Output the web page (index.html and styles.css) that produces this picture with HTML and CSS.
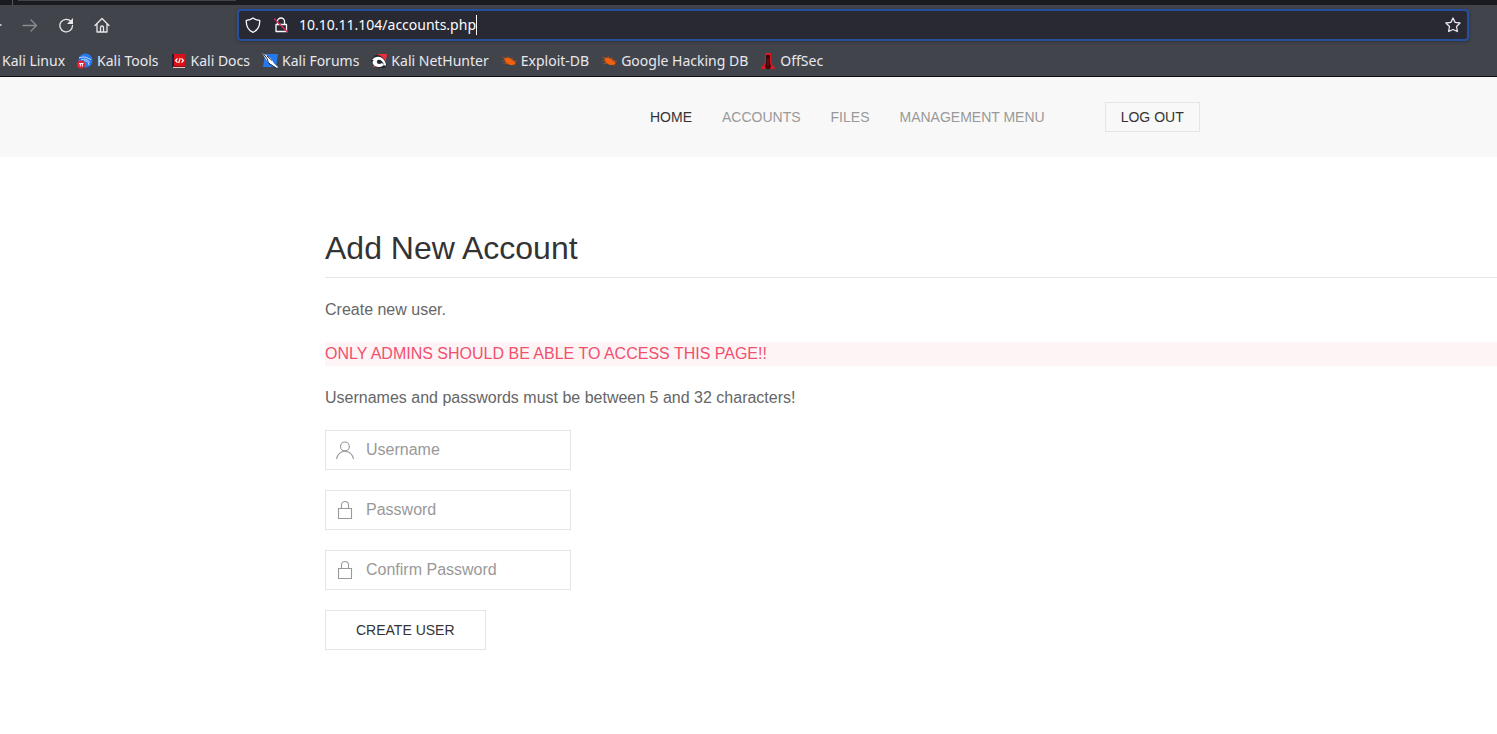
FILE: index.html
```html
<!DOCTYPE html>
<html lang="en">
<head>
<meta charset="utf-8">
<title>Accounts</title>
<link rel="stylesheet" href="styles.css">
</head>
<body>
<div class="browser">
  <div class="tabstrip"><span class="tab-edge"></span><span class="tab"></span></div>
  <div class="toolbar">
    <div class="nav-buttons">
      <button class="tool back" aria-label="Back"><svg width="16" height="16" viewBox="0 0 16 16"><path d="M2 8h13M7 3L2 8l5 5"/></svg></button>
      <button class="tool forward" aria-label="Forward" disabled><svg width="16" height="16" viewBox="0 0 16 16"><path d="M1 8.500h13.500M9 3l5.500 5.500L9 14"/></svg></button>
      <button class="tool" aria-label="Reload"><svg width="16" height="16" viewBox="0 0 16 16"><path d="M13 4.500A6.300 6.300 0 1 0 14.500 8.500"/><path class="solid" d="M15 1v6H9z"/></svg></button>
      <button class="tool" aria-label="Home"><svg width="16" height="16" viewBox="0 0 16 16"><path d="M1 8.500L8 1.500l7 7M3 7v8h10V7M6.500 15V10.500a1.500 1.500 0 0 1 3 0V15"/></svg></button>
    </div>
    <div class="urlbar">
      <svg width="16" height="16" viewBox="0 0 16 16"><path d="M8 1C6 2.600 3.800 3.200 1.300 3.400C1 9 3.500 13.300 8 15.300C12.500 13.300 15 9 14.700 3.400C12.200 3.200 10 2.600 8 1z"/></svg>
      <svg class="lock" width="16" height="16" viewBox="0 0 16 16"><path d="M4.500 7.500V4.500a3.500 3.500 0 0 1 7 0v3M3 7.500h10.500v7H3z"/><path class="slash" d="M1.500 2l13 13"/></svg>
      <div class="url-field">
        <input class="url" type="text" size="17" aria-label="Address" value="10.10.11.104/accounts.php">
        <span class="caret"></span>
      </div>
      <button class="tool star" aria-label="Bookmark this page"><svg width="16" height="16" viewBox="0 0 16 16"><path d="M8 1l2.100 4.400 5 .6-3.600 3.500.9 5L8 12.500l-4.400 2 .9-5L.9 6l5-.6z"/></svg></button>
    </div>
  </div>
  <nav class="bookmarks" aria-label="Bookmarks">
    <a href="#">Kali Linux</a>
    <a href="#"><svg width="16" height="16" viewBox="0 0 16 16"><circle cx="8.500" cy="7.500" r="7" fill="#2878f0"/><path d="M2 4.500Q8 2.500 14 6.500M4 7q5-2.500 9 2.500M7 8q4-1 5 4" fill="none" stroke="#b9d7ff"/><circle cx="4" cy="11.500" r="4" fill="#ef1c2b"/><path d="M2 10.500h4.500M3.300 10.500v3M5.300 10.500v3" fill="none" stroke="#fff"/></svg>Kali Tools</a>
    <a href="#"><svg width="16" height="16" viewBox="0 0 16 16"><path d="M1 1h2v13H1z" fill="#18243d"/><path d="M3 1h11v12H3z" fill="#db1117"/><path d="M2 14h12v1H2z" fill="#e7c6c6"/><path d="M2 13h12v1H2z" fill="#8d1118"/><path d="M6.500 5.500l-2 2 2 2M10.500 5.500l2 2-2 2M9.200 5l-1.500 5" fill="none" stroke="#fff" stroke-width="1.200"/></svg>Kali Docs</a>
    <a href="#"><svg width="16" height="16" viewBox="0 0 16 16"><path d="M3 1h13l-2 13H1z" fill="#2678ee"/><path d="M0 0l4 2 5 3.500 3 5L16 14l-1 1-4-2.500-5-3z" fill="#fff"/><path d="M1 .5l4 5 1.500 4.500 5 3.500 3 2M5 3l5 4.500" fill="none" stroke="#1c2632"/></svg>Kali Forums</a>
    <a href="#"><svg width="16" height="16" viewBox="0 0 16 16"><path d="M4 1h12l-2 13H2z" fill="#f22d36"/><path d="M0 7l5-6 5 2 4 4 2 5-2 3-7 0-5-3z" fill="#202a30"/><path d="M1 7C4 3 8 3 11 5c3 2 4 5 4 8l-2-1C12 8 9 6 7 7c-2 1-1 4 1 4 1 0 2-.5 3-1l2 2c-2 2-6 3-9 1-3-2-3-5-1-6z" fill="#fff"/></svg>Kali NetHunter</a>
    <a href="#"><svg width="16" height="16" viewBox="0 0 16 16"><path d="M3 5.500l3-1 4 1 2 2 2 1 .5 2-1.500 1.500H9l-4-2z" fill="#f2600d"/><path d="M1 4l4 1.500M1 8h4M2 11l5-1M7 3l2 3M11 4v3M12 8h4M12 11l2 2" fill="none" stroke="#a3522c" stroke-width=".8"/></svg>Exploit-DB</a>
    <a href="#"><svg width="16" height="16" viewBox="0 0 16 16"><path d="M3 5.500l3-1 4 1 2 2 2 1 .5 2-1.500 1.500H9l-4-2z" fill="#f2600d"/><path d="M1 4l4 1.500M1 8h4M2 11l5-1M7 3l2 3M11 4v3M12 8h4M12 11l2 2" fill="none" stroke="#a3522c" stroke-width=".8"/></svg>Google Hacking DB</a>
    <a href="#"><svg width="16" height="16" viewBox="0 0 16 16"><path d="M5 0h6v10l4 5v1H1v-1l4-5z" fill="#da1922"/><path d="M6 2h4v8l1 3-1 3H6l-1-3 1-3z" fill="#3b0508"/><path d="M7.500 5h1v8h-1z" fill="#8c1017"/></svg>OffSec</a>
  </nav>
</div>

<header class="site-header">
  <nav class="site-nav" aria-label="Main">
    <a class="active" href="#">HOME</a>
    <a href="#">ACCOUNTS</a>
    <a href="#">FILES</a>
    <a href="#">MANAGEMENT MENU</a>
  </nav>
  <button class="button small" type="button">LOG OUT</button>
</header>

<main class="content">
  <h1>Add New Account</h1>
  <p>Create new user.</p>
  <p class="danger">ONLY ADMINS SHOULD BE ABLE TO ACCESS THIS PAGE!!</p>
  <p>Usernames and passwords must be between 5 and 32 characters!</p>
  <form class="account-form">
    <label class="field"><svg width="20" height="20" viewBox="0 0 20 20"><circle cx="9.900" cy="6.400" r="4.400"/><path d="M1.500 19C2.300 14.500 5.800 11.200 10 11.200c4.200 0 7.700 3.300 8.500 7.800"/></svg><input type="text" placeholder="Username" aria-label="Username"></label>
    <label class="field"><svg width="20" height="20" viewBox="0 0 20 20"><path d="M3.500 8.500h13v10h-13zM6.500 8V4.900C6.500 3 8.100 1.500 10 1.500s3.500 1.500 3.500 3.400V8"/></svg><input type="password" placeholder="Password" aria-label="Password"></label>
    <label class="field"><svg width="20" height="20" viewBox="0 0 20 20"><path d="M3.500 8.500h13v10h-13zM6.500 8V4.900C6.500 3 8.100 1.500 10 1.500s3.500 1.500 3.500 3.400V8"/></svg><input type="password" placeholder="Confirm Password" aria-label="Confirm Password"></label>
    <button class="button" type="button">CREATE USER</button>
  </form>
</main>
</body>
</html>
```

FILE: styles.css
```css
* { box-sizing: border-box; }
body {
  margin: 0;
  background: #fff;
  color: #666;
  font: 16px/24px "Liberation Sans", Arial, sans-serif;
  overflow-x: hidden;
}
a { text-decoration: none; }
svg { display: block; flex: none; }

/* Browser chrome */
.browser {
  background: #42444c;
  border-bottom: 1px solid #0c0c0d;
  color: #fbfbfe;
  font-family: "Noto Sans", sans-serif;
}
.tabstrip { display: flex; height: 5px; background: #1a1b20; }
.tab-edge { width: 13px; border-right: 1px solid #55565c; }
.tab { width: 218px; height: 1px; margin-left: 5px; background: #42444c; }
.toolbar { display: flex; align-items: center; height: 40px; padding-right: 28px; }
.nav-buttons { display: flex; gap: 20px; width: 237px; margin-left: -14px; margin-right: 14px; }
.tool { padding: 0; border: 0; background: none; color: #e8e8ec; }
.forward { color: #8b8c92; }
.tool svg, .urlbar svg { fill: none; stroke: currentColor; stroke-width: 1.3; stroke-linejoin: round; stroke-linecap: round; }
.tool .solid { fill: currentColor; stroke: none; }
.urlbar {
  display: flex;
  flex: 1;
  align-items: center;
  height: 32px;
  padding: 0 6px;
  border: 2px solid #264f9d;
  border-radius: 4px;
  background: #282933;
  box-shadow: 0 1px 3px #303138;
}
.urlbar .lock { margin: 0 10px 0 12px; }
.urlbar .slash { stroke: #e22850; }
.url-field { display: flex; flex: 1; align-items: center; }
.url {
  field-sizing: content;
  padding: 0;
  border: 0;
  outline: 0;
  background: none;
  color: #fbfbfe;
  font: 14px/24px "Noto Sans", sans-serif;
}
.caret { width: 1px; height: 20px; background: #fff; }
.bookmarks { display: flex; gap: 12px; height: 31px; padding-left: 2px; }
.bookmarks a {
  display: flex;
  align-items: center;
  gap: 4px;
  color: #e8e8ec;
  font-size: 14px;
  line-height: 30px;
  white-space: nowrap;
}

/* Site header */
.site-header { display: flex; align-items: center; height: 80px; padding-left: 650px; background: #f8f8f8; }
.site-nav { display: flex; gap: 30px; margin-right: 60px; font-size: 14px; white-space: nowrap; }
.site-nav a { color: #999; }
.site-nav .active { color: #333; }
.button {
  height: 40px;
  padding: 0 30px;
  border: 1px solid #e5e5e5;
  background: transparent;
  color: #333;
  font: 14px/38px "Liberation Sans", Arial, sans-serif;
  white-space: nowrap;
}
.button.small { height: 30px; padding: 0 15px; line-height: 28px; }

/* Account page */
.content { padding: 70px 0 70px 325px; }
h1 {
  margin: 0 0 20px;
  padding-bottom: 8px;
  border-bottom: 1px solid #e5e5e5;
  color: #333;
  font-size: 32px;
  font-weight: 400;
  line-height: 42px;
}
p { margin: 0 0 20px; }
.danger { background: #fef4f6; color: #f0506e; }
.account-form { display: flex; flex-direction: column; align-items: flex-start; gap: 20px; }
.field { display: flex; align-items: center; width: 246px; height: 40px; padding: 0 9px; border: 1px solid #e5e5e5; }
.field svg { fill: none; stroke: #999; stroke-width: 1.1; }
.field input {
  flex: 1;
  min-width: 0;
  margin-left: 11px;
  padding: 0;
  border: 0;
  outline: 0;
  background: none;
  color: #666;
  font: 16px/38px "Liberation Sans", Arial, sans-serif;
}
.field input::placeholder { color: #999; }
```
